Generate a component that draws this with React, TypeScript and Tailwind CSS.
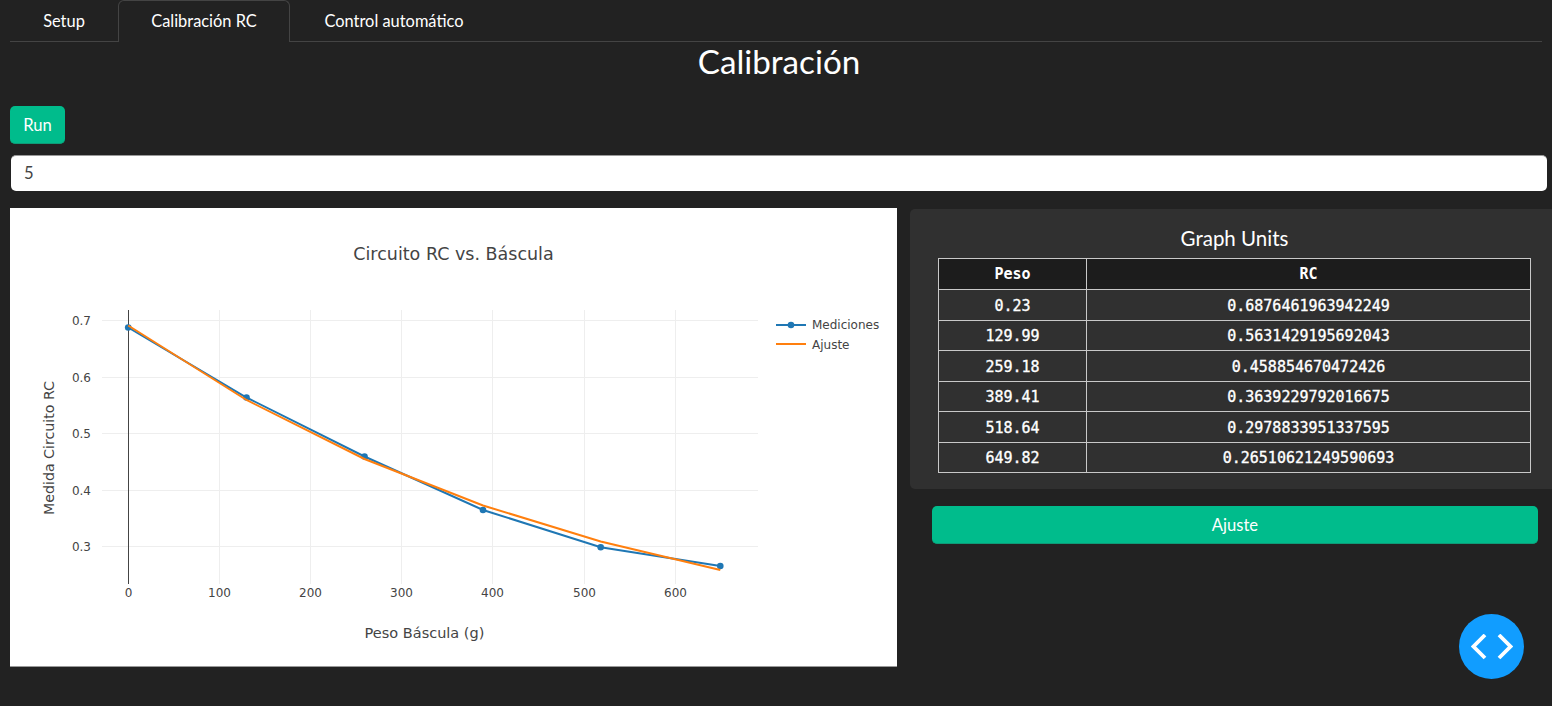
import React from "react";

const rows = [
  ["0.23", "0.6876461963942249"],
  ["129.99", "0.5631429195692043"],
  ["259.18", "0.458854670472426"],
  ["389.41", "0.3639229792016675"],
  ["518.64", "0.2978833951337595"],
  ["649.82", "0.26510621249590693"],
];

const xTicks = [
  [118.5, "0"],
  [209.5, "100"],
  [300.5, "200"],
  [391.5, "300"],
  [482.5, "400"],
  [574.5, "500"],
  [665.5, "600"],
] as const;

const yTicks = [
  [112.5, "0.7"],
  [169.5, "0.6"],
  [225.5, "0.5"],
  [282.5, "0.4"],
  [338.5, "0.3"],
] as const;

const blue = [
  [118.2, 119.5],
  [236.5, 189.5],
  [354.5, 248.5],
  [473, 302],
  [590.7, 339.3],
  [710.3, 358],
];

const orange = [
  [118.2, 117.5],
  [236.5, 192],
  [354.5, 251],
  [473, 297.5],
  [590.7, 333.5],
  [710.3, 362],
];

const toPoints = (pts: number[][]) => pts.map((p) => p.join(",")).join(" ");

const Chart = () => {
  return (
    <svg width="887" height="458" viewBox="0 0 887 458" className="block font-['DejaVu_Sans',sans-serif]">
      <rect width="887" height="458" fill="#ffffff" />
      <text x="443.5" y="51.5" textAnchor="middle" fontSize="17.5" fill="#444444">
        Circuito RC vs. Báscula
      </text>

      {xTicks.slice(1).map(([x]) => (
        <line key={x} x1={x} x2={x} y1="102" y2="376" stroke="#eeeeee" />
      ))}
      {yTicks.map(([y]) => (
        <line key={y} x1="92" x2="748" y1={y} y2={y} stroke="#eeeeee" />
      ))}
      <line x1="118.5" x2="118.5" y1="102" y2="376" stroke="#444444" />

      {xTicks.map(([x, label]) => (
        <text key={label} x={x} y="389" textAnchor="middle" fontSize="12" fill="#444444">
          {label}
        </text>
      ))}
      {yTicks.map(([y, label]) => (
        <text key={label} x="81" y={y + 4} textAnchor="end" fontSize="12" fill="#444444">
          {label}
        </text>
      ))}

      <polyline points={toPoints(blue)} fill="none" stroke="#1f77b4" strokeWidth="2" />
      {blue.map(([x, y]) => (
        <circle key={x} cx={x} cy={y} r="3.3" fill="#1f77b4" />
      ))}
      <polyline points={toPoints(orange)} fill="none" stroke="#ff7f0e" strokeWidth="2" />

      <text x="414.5" y="430" textAnchor="middle" fontSize="14.5" fill="#444444">
        Peso Báscula (g)
      </text>
      <text
        transform="translate(44,240) rotate(-90)"
        textAnchor="middle"
        fontSize="14.2"
        fill="#444444"
      >
        Medida Circuito RC
      </text>

      <line x1="766" x2="796" y1="117" y2="117" stroke="#1f77b4" strokeWidth="2" />
      <circle cx="781" cy="117" r="3.3" fill="#1f77b4" />
      <text x="802" y="121" fontSize="12" fill="#444444">
        Mediciones
      </text>
      <line x1="766" x2="796" y1="136" y2="136" stroke="#ff7f0e" strokeWidth="2" />
      <text x="802" y="141" fontSize="12" fill="#444444">
        Ajuste
      </text>
    </svg>
  );
};

const App = () => {
  return (
    <div className="h-[706px] overflow-hidden bg-[#222222] font-['Lato',sans-serif] text-white">
      {/* tabs */}
      <div className="mx-[10px] flex h-[42px] border-b border-[#444444] text-[16.4px]">
        <div className="flex h-[42px] w-[108px] items-center justify-center">Setup</div>
        <div className="flex h-[42px] w-[172px] items-center justify-center rounded-t-[6px] border border-b-0 border-[#444444] bg-[#222222]">
          Calibración RC
        </div>
        <div className="flex h-[42px] w-[208px] items-center justify-center">Control automático</div>
      </div>

      <h2 className="h-[41px] pl-[6px] text-center text-[33.2px] leading-[38px]">Calibración</h2>

      <div className="mt-[23px] ml-[10px] flex h-[38px] w-[55px] items-center justify-center rounded-[5px] border-b border-[#0f9a77] bg-[#00bc8c] pt-[2px] text-[16.6px]">
        Run
      </div>

      <div className="mt-[11px] mr-[5px] ml-[11px] flex h-[36px] items-center rounded-[5px] border-t border-[#999999] bg-white px-[13px] text-[16.6px] text-[#444444]">
        5
      </div>

      <div className="mt-[17px] flex">
        <div className="ml-[10px] w-[887px] border-b border-[#999999]">
          <Chart />
        </div>

        <div className="ml-[13px] flex-1">
          <div className="mt-[1px] h-[280px] rounded-tl-[5px] rounded-bl-[5px] bg-[#303030] pt-[15px] pl-[28px]">
            <div className="w-[593px]">
              <h4 className="h-[34px] text-center text-[20.5px] leading-[28px]">Graph Units</h4>
              <table className="w-[593px] table-fixed border-collapse font-['DejaVu_Sans_Mono',monospace] text-[15px] [-webkit-text-stroke:0.35px_#ffffff]">
                <thead>
                  <tr className="h-[31px] bg-[#1c1c1c]">
                    <th className="w-[148px] border border-[#c8c8c8] pt-[1px] font-bold [-webkit-text-stroke:0px]">Peso</th>
                    <th className="border border-[#c8c8c8] pt-[1px] font-bold [-webkit-text-stroke:0px]">RC</th>
                  </tr>
                </thead>
                <tbody>
                  {rows.map(([peso, rc]) => (
                    <tr key={peso} className="h-[30.5px]">
                      <td className="border border-[#c8c8c8] pt-[2px] text-center">{peso}</td>
                      <td className="border border-[#c8c8c8] pt-[2px] text-center">{rc}</td>
                    </tr>
                  ))}
                </tbody>
              </table>
            </div>
          </div>

          <div className="mt-[17px] mr-[14px] ml-[22px] flex h-[38px] items-center justify-center rounded-[5px] border-b border-[#0f9a77] bg-[#00bc8c] pt-[2px] text-[16.6px]">
            Ajuste
          </div>
        </div>
      </div>

      {/* floating code button */}
      <div className="fixed top-[614px] left-[1459px] flex h-[65px] w-[65px] items-center justify-center rounded-full bg-[#119dff]">
        <svg width="42" height="26" viewBox="0 0 42 26" fill="none" stroke="#ffffff" strokeWidth="3.8">
          <polyline points="14,1 2.5,12.5 14,24" />
          <polyline points="28,1 39.5,12.5 28,24" />
        </svg>
      </div>
    </div>
  );
};

export default App;
